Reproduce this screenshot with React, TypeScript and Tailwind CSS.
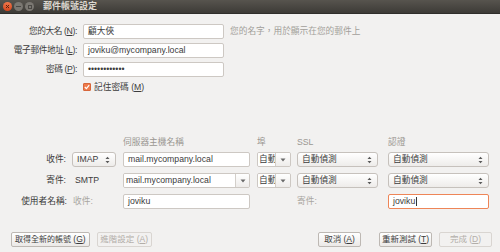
import React from "react";

const font = { fontFamily: '"Liberation Sans", "Noto Sans CJK TC", sans-serif' };

function UpDown() {
  return (
    <svg width="5" height="8" viewBox="0 0 5 8" className="shrink-0">
      <path d="M0.5 3 L2.5 0.8 L4.5 3 Z" fill="#5a5a5a" />
      <path d="M0.5 5 L2.5 7.2 L4.5 5 Z" fill="#5a5a5a" />
    </svg>
  );
}

function Down() {
  return (
    <svg width="6" height="4" viewBox="0 0 6 4">
      <path d="M0.5 0.5 L5.5 0.5 L3 3.5 Z" fill="#6a6a6a" />
    </svg>
  );
}

function U({ c }: { c: string }) {
  return <span className="underline underline-offset-1">{c}</span>;
}

function Input({ value, w, focus }: { value: string; w: string; focus?: boolean }) {
  return (
    <div
      className={`${w} h-[15px] bg-white rounded-[2px] px-[4px] flex items-center text-[8.7px] text-[#3c3c3c] border ${
        focus ? "border-[#ee8557]" : "border-[#cdc8c3]"
      }`}
    >
      <span className="leading-none whitespace-nowrap">{value}</span>
      {focus && <span className="w-px h-[9px] bg-[#333] ml-px" />}
    </div>
  );
}

function Select({ value, w }: { value: string; w: string }) {
  return (
    <div
      className={`${w} h-[15px] rounded-[3px] border border-[#c6c1bc] bg-gradient-to-b from-white to-[#eeecea] flex items-center justify-between pl-[4px] pr-[5px] text-[8.7px] text-[#3c3c3c]`}
    >
      <span className="leading-none whitespace-nowrap">{value}</span>
      <UpDown />
    </div>
  );
}

function PortCombo() {
  return (
    <div className="w-[34px] h-[15px] rounded-[2px] border border-[#cdc8c3] flex overflow-hidden">
      <div className="w-[17px] bg-white flex items-center pl-[1px] overflow-hidden text-[8.7px] text-[#3c3c3c]">
        <span className="leading-none whitespace-nowrap">自動</span>
      </div>
      <div className="flex-1 border-l border-[#d3cfca] bg-gradient-to-b from-white to-[#eeecea] flex items-center justify-center">
        <Down />
      </div>
    </div>
  );
}

function HostCombo() {
  return (
    <div className="w-[127px] h-[15px] rounded-[2px] border border-[#cdc8c3] flex overflow-hidden">
      <div className="flex-1 bg-white flex items-center pl-[2px] text-[8.7px] text-[#3c3c3c]">
        <span className="leading-none whitespace-nowrap">mail.mycompany.local</span>
      </div>
      <div className="w-[14px] border-l border-[#d3cfca] bg-gradient-to-b from-white to-[#eeecea] flex items-center justify-center">
        <Down />
      </div>
    </div>
  );
}

function Button({ children, w, disabled }: { children: React.ReactNode; w: string; disabled?: boolean }) {
  return (
    <div
      className={`${w} h-[15px] rounded-[2px] border flex items-center justify-center text-[8.5px] ${
        disabled
          ? "border-[#d9d5d1] text-[#b2aea9] bg-[#f2f1f0]"
          : "border-[#bdb8b3] text-[#3c3c3c] bg-gradient-to-b from-white to-[#ebe9e7]"
      }`}
    >
      <span className="leading-none whitespace-nowrap">{children}</span>
    </div>
  );
}

export default function App() {
  return (
    <div className="w-[500px] h-[252px] bg-[#f2f1f0] flex flex-col overflow-hidden" style={font}>
      {/* title bar */}
      <div className="h-[14px] bg-gradient-to-b from-[#57544e] to-[#3d3b37] border-b border-[#2f2e2b] flex items-center pl-[3px]">
        <div className="w-[9px] h-[9px] rounded-full bg-gradient-to-b from-[#f2774a] to-[#d4451c] flex items-center justify-center">
          <svg width="5" height="5" viewBox="0 0 5 5">
            <path d="M1 1 L4 4 M4 1 L1 4" stroke="#5b2412" strokeWidth="1" />
          </svg>
        </div>
        <div className="w-[9px] h-[9px] rounded-full bg-[#7b7872] ml-[2px] flex items-center justify-center">
          <div className="w-[5px] h-px bg-[#4a4844]" />
        </div>
        <div className="w-[9px] h-[9px] rounded-full bg-[#7b7872] ml-[2px] flex items-center justify-center">
          <div className="w-[4px] h-[4px] border border-[#4a4844]" />
        </div>
        <span className="ml-[9px] text-[9px] font-bold text-[#dcd8d0] leading-none">郵件帳號設定</span>
      </div>

      {/* account section */}
      <div className="mt-[10px] grid grid-cols-[77px_141px_auto] gap-x-[6px] gap-y-[4px] items-center text-[8.7px] text-[#3c3c3c]">
        <div className="text-right leading-none whitespace-nowrap tracking-[-0.4px]">
          您的大名 (<U c="N" />):
        </div>
        <Input value="顧大俠" w="w-[141px]" />
        <div className="text-[#a29f9a] leading-none whitespace-nowrap">您的名字，用於顯示在您的郵件上</div>

        <div className="text-right leading-none whitespace-nowrap tracking-[-0.4px]">
          電子郵件地址 (<U c="L" />):
        </div>
        <Input value="joviku@mycompany.local" w="w-[141px]" />
        <div />

        <div className="text-right leading-none whitespace-nowrap tracking-[-0.4px]">
          密碼 (<U c="P" />):
        </div>
        <Input value="••••••••••••" w="w-[141px]" />
        <div />

        <div />
        <div className="h-[12px] flex items-center gap-[3px]">
          <div className="w-[8px] h-[8px] rounded-[1px] bg-[#ef7a4a] border border-[#d7663a] flex items-center justify-center">
            <svg width="6" height="6" viewBox="0 0 6 6">
              <path d="M0.8 3 L2.4 4.6 L5.2 1.2" stroke="#fff" strokeWidth="1.2" fill="none" />
            </svg>
          </div>
          <span className="leading-none whitespace-nowrap">
            記住密碼 (<U c="M" />)
          </span>
        </div>
        <div />
      </div>

      {/* server section */}
      <div className="mt-[45px] grid grid-cols-[72px_51px_134px_40px_91px_102px] items-center text-[8.7px] text-[#3c3c3c]">
        <div />
        <div />
        <div className="h-[10px] text-[#9a9792] leading-none whitespace-nowrap">伺服器主機名稱</div>
        <div className="h-[10px] text-[#9a9792] leading-none whitespace-nowrap">埠</div>
        <div className="h-[10px] text-[#9a9792] leading-none whitespace-nowrap">SSL</div>
        <div className="h-[10px] text-[#9a9792] leading-none whitespace-nowrap">認證</div>

        <div className="mt-[4px] text-right pr-[6px] leading-none">收件:</div>
        <div className="mt-[4px]">
          <Select value="IMAP" w="w-[44px]" />
        </div>
        <div className="mt-[4px]">
          <Input value="mail.mycompany.local" w="w-[127px]" />
        </div>
        <div className="mt-[4px]">
          <PortCombo />
        </div>
        <div className="mt-[4px]">
          <Select value="自動偵測" w="w-[81px]" />
        </div>
        <div className="mt-[4px]">
          <Select value="自動偵測" w="w-[101px]" />
        </div>

        <div className="mt-[6px] text-right pr-[6px] leading-none">寄件:</div>
        <div className="mt-[6px] pl-[3px] leading-none">SMTP</div>
        <div className="mt-[6px]">
          <HostCombo />
        </div>
        <div className="mt-[6px]">
          <PortCombo />
        </div>
        <div className="mt-[6px]">
          <Select value="自動偵測" w="w-[81px]" />
        </div>
        <div className="mt-[6px]">
          <Select value="自動偵測" w="w-[101px]" />
        </div>

        <div className="mt-[6px] text-right pr-[5px] leading-none whitespace-nowrap">使用者名稱:</div>
        <div className="mt-[6px] pl-[1px] text-[#a9a6a1] leading-none">收件:</div>
        <div className="mt-[6px]">
          <Input value="joviku" w="w-[127px]" />
        </div>
        <div className="mt-[6px]" />
        <div className="mt-[6px] text-[#a9a6a1] leading-none">寄件:</div>
        <div className="mt-[6px]">
          <Input value="joviku" w="w-[101px]" focus />
        </div>
      </div>

      {/* buttons */}
      <div className="mt-[23px] flex items-center pl-[11px]">
        <Button w="px-[3px]">
          <span className="text-[8px]">取得全新的帳號</span> (<U c="G" />)
        </Button>
        <div className="ml-[7px]">
          <Button w="w-[55px]" disabled>
            進階設定 (<U c="A" />)
          </Button>
        </div>
        <div className="ml-auto flex items-center pr-[8px]">
          <Button w="w-[43px]">
            取消 (<U c="A" />)
          </Button>
          <div className="ml-[18px]">
            <Button w="w-[53px]">
              重新測試 (<U c="T" />)
            </Button>
          </div>
          <div className="ml-[7px]">
            <Button w="w-[53px]" disabled>
              完成 (<U c="D" />)
            </Button>
          </div>
        </div>
      </div>
    </div>
  );
}
